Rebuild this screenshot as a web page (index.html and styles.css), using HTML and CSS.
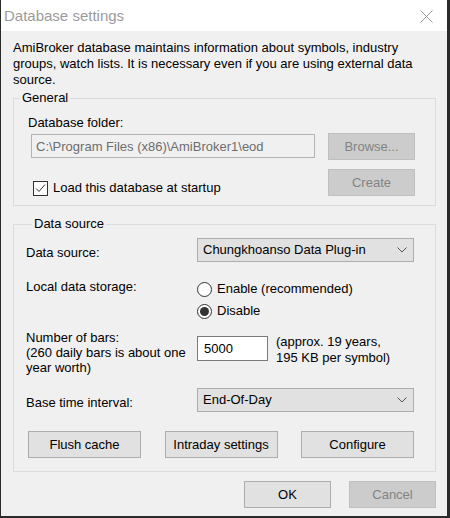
FILE: index.html
```html
<!DOCTYPE html>
<html lang="en">
<head>
<meta charset="UTF-8">
<meta name="viewport" content="width=device-width, initial-scale=1.0">
<link rel="stylesheet" href="styles.css">
<title>Database settings</title>
</head>
<body>
<div class="window">
  <div class="titlebar">
    <span class="title">Database settings</span>
    <svg class="close" width="13" height="13" viewBox="0 0 13 13"><path d="M0.5 0.5L12.5 12.5M12.5 0.5L0.5 12.5" stroke="#9a9a9a" stroke-width="1" fill="none"/></svg>
  </div>
  <div class="client">
    <p class="intro">AmiBroker database maintains information about symbols, industry<br>groups, watch lists. It is necessary even if you are using external data<br>source.</p>

    <fieldset class="group">
      <legend>General</legend>
      <div class="folder">
        <div class="folder-main">
          <div>Database folder:</div>
          <input class="edit path" type="text" value="C:\Program Files (x86)\AmiBroker1\eod" disabled>
          <div class="check-row">
            <span class="check"><svg width="13" height="13" viewBox="0 0 13 13"><polyline points="2,6.5 5,9.5 11,2.5" stroke="#333" stroke-width="1" fill="none"/></svg></span>
            Load this database at startup
          </div>
        </div>
        <div class="folder-side">
          <button class="btn" disabled>Browse...</button>
          <button class="btn" disabled>Create</button>
        </div>
      </div>
    </fieldset>

    <fieldset class="group source">
      <legend>Data source</legend>
      <div class="row r1">
        <div class="row-label pad7">Data source:</div>
        <div class="combo">Chungkhoanso Data Plug-in<svg width="10" height="6" viewBox="0 0 10 6"><polyline points="0.5,0.5 5,5 9.5,0.5" stroke="#555" stroke-width="1" fill="none"/></svg></div>
      </div>
      <div class="row r2">
        <div class="row-label pad1">Local data storage:</div>
        <div class="radios">
          <div class="radio-row"><span class="radio"></span>Enable (recommended)</div>
          <div class="radio-row"><span class="radio on"></span>Disable</div>
        </div>
      </div>
      <div class="row r3">
        <div class="row-label bars">Number of bars:<br>(260 daily bars is about one<br>year worth)</div>
        <input class="edit count" type="text" value="5000">
        <div class="note">(approx. 19 years,<br>195 KB per symbol)</div>
      </div>
      <div class="row r4">
        <div class="row-label pad7">Base time interval:</div>
        <div class="combo">End-Of-Day<svg width="10" height="6" viewBox="0 0 10 6"><polyline points="0.5,0.5 5,5 9.5,0.5" stroke="#555" stroke-width="1" fill="none"/></svg></div>
      </div>
      <div class="tools">
        <button class="btn wide">Flush cache</button>
        <button class="btn wide">Intraday settings</button>
        <button class="btn wide">Configure</button>
      </div>
    </fieldset>

    <div class="actions">
      <button class="btn">OK</button>
      <button class="btn" disabled>Cancel</button>
    </div>
  </div>
</div>
</body>
</html>
```

FILE: styles.css
```css
* { box-sizing: border-box; }
body { margin: 0; background: #f0f0f0; color: #000; font-family: "Liberation Sans", Arial, sans-serif; font-size: 13px; line-height: 16px; }

.window { width: 450px; height: 518px; display: flex; flex-direction: column; background: #f0f0f0; border-left: 1px solid #2b2b2b; border-right: 3px solid #2b2b2b; border-bottom: 2px solid #2b2b2b; }
.titlebar { height: 31px; flex: none; display: flex; align-items: center; justify-content: space-between; padding: 0 14px 0 3px; background: #fff; }
.title { font-size: 15px; color: #9b9b9b; }
.close { display: block; margin-top: 1px; }

.client { flex: 1; padding: 9px 11px 0 12px; }
.intro { margin: 0; }

.group { margin: 2px 0 0; padding: 0; min-width: 0; border: 1px solid #dcdcdc; }
.group legend { margin-left: 6px; padding: 0 2px; line-height: 16px; }
.source { margin-top: 10px; padding: 6px 21px 13px 12px; }

/* general box */
.folder { display: flex; justify-content: space-between; padding: 9px 20px 9px 14px; }
.folder-main { display: flex; flex-direction: column; align-items: flex-start; }
.folder-side { display: flex; flex-direction: column; gap: 9px; margin-top: 18px; }
.check-row { display: flex; align-items: center; gap: 5px; height: 16px; margin: 22px 0 0 5px; }
.check { width: 15px; height: 15px; display: flex; align-items: center; justify-content: center; background: #fff; border: 1px solid #333; }
.check svg { display: block; }

/* inputs */
.edit { font: inherit; margin: 0; padding: 0 4px; border: 1px solid #7a7a7a; background: #fff; color: #000; outline: none; }
.path { width: 284px; height: 24px; margin: 3px 0 0 3px; border-color: #b4b4b4; background: #f0f0f0; color: #6d6d6d; }
.count { width: 71px; height: 25px; margin-top: 6px; padding-left: 6px; }

.combo { width: 218px; height: 24px; display: flex; align-items: center; justify-content: space-between; padding: 0 6px 0 5px; background: #e1e1e1; border: 1px solid #adadad; }
.combo svg { display: block; }

/* data source rows */
.row { display: flex; align-items: flex-start; }
.row-label { width: 171px; flex: none; }
.pad7 { padding-top: 7px; }
.pad1 { padding-top: 1px; }
.r2 { margin-top: 16px; }
.r3 { margin-top: 8px; }
.r4 { margin-top: 13px; }
.bars { line-height: 15px; }
.note { margin: 4px 0 0 8px; }

.radios { display: flex; flex-direction: column; }
.radio-row { height: 22px; display: flex; align-items: center; gap: 5px; }
.radio { width: 15px; height: 15px; display: flex; align-items: center; justify-content: center; background: #fff; border: 1px solid #333; border-radius: 50%; }
.radio.on::after { content: ""; width: 9px; height: 9px; border-radius: 50%; background: #333; }

/* buttons */
.btn { font: inherit; width: 87px; height: 27px; margin: 0; padding: 0; color: #000; background: #e1e1e1; border: 1px solid #adadad; }
.btn:disabled { color: #838383; background: #cccccc; border-color: #bfbfbf; }
.btn.wide { width: 113px; }
.tools { display: flex; justify-content: space-between; margin-top: 19px; padding-left: 2px; }
.actions { display: flex; justify-content: flex-end; gap: 18px; margin-top: 9px; }
```
